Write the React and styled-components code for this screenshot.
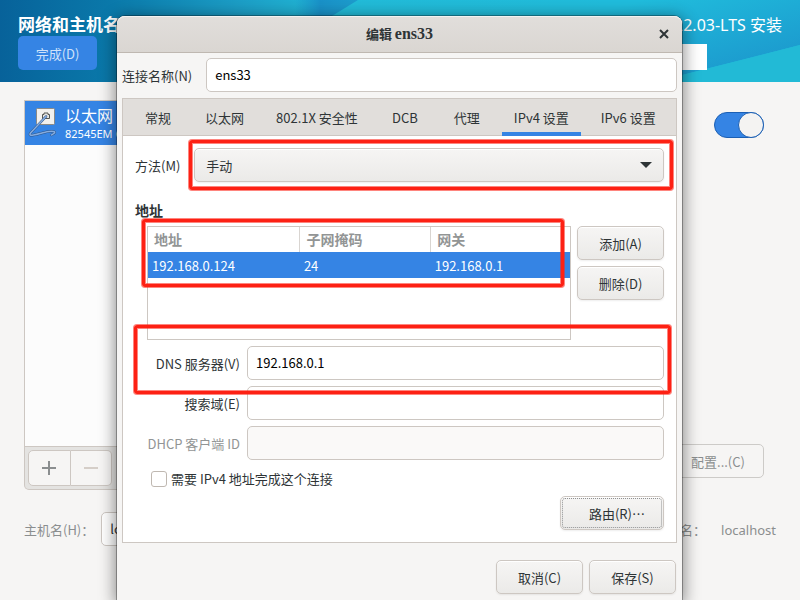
import React, { useState } from 'react';
import styled, { createGlobalStyle } from 'styled-components';

const GlobalStyle = createGlobalStyle`
    *, *::before{
        box-sizing:border-box;
    }
    body{
        margin:0;
        background:#f6f5f4;
        color:#2e3436;
        font-family:"Noto Sans CJK SC", "Noto Sans", sans-serif;
        font-size:13px;
        line-height:20px;
    }
    button, input, select{
        font:inherit;
        color:inherit;
        margin:0;
    }
`

const Page = styled.div`
    position:relative;
    height:100vh;
    min-height:600px;
    display:flex;
    flex-direction:column;
    overflow:hidden;
`

/* ---------- installer screen ---------- */

const Banner = styled.header`
    position:relative;
    height:82px;
    flex:none;
    display:flex;
    justify-content:space-between;
    padding:12px 18px;
    color:white;
    background:#1fb4d5;
`
const BannerArt = styled.svg`
    position:absolute;
    inset:0;
    width:100%;
    height:100%;
`
const BannerSide = styled.div`
    position:relative;
    display:flex;
    flex-direction:column;
    align-items:${props => props.$end ? "flex-end" : "flex-start"};
`
const ScreenTitle = styled.h1`
    margin:0;
    font-size:17px;
    line-height:24px;
    font-weight:700;
    white-space:nowrap;
`
const Product = styled.div`
    font-family:"Noto Sans", "Noto Sans CJK SC", sans-serif;
    font-size:16px;
    line-height:26px;
    white-space:nowrap;
`
const DoneButton = styled.button`
    width:79px;
    height:34px;
    padding:2px 0 0;
    border:none;
    border-radius:5px;
    background:#3584e4;
    color:#cfe2fa;
`
const Layout = styled.button`
    width:70px;
    height:26px;
    margin:6px 75px 0 0;
    border:none;
    background:white;
`
const Main = styled.main`
    flex:1;
    display:flex;
    justify-content:space-between;
    padding:18px 36px 0 24px;
`
const Devices = styled.section`
    width:260px;
    display:flex;
    flex-direction:column;
`
const DeviceList = styled.div`
    height:347px;
    border:1px solid #cdc7c2;
    background:#fcfcfc;
`
const Device = styled.div`
    height:44px;
    display:flex;
    align-items:center;
    gap:7px;
    padding:0 3px;
    background:#3584e4;
    color:white;
    white-space:nowrap;
`
const DeviceName = styled.div`
    padding-top:1px;
    font-size:16px;
    line-height:20px;
`
const DeviceModel = styled.div`
    font-family:"Noto Sans", sans-serif;
    font-size:11px;
    line-height:18px;
`
const ListTools = styled.div`
    height:43px;
    display:flex;
    padding:3px;
    border:1px solid #cdc7c2;
    border-top:none;
    border-radius:0 0 5px 5px;
    background:#e4e3e1;
`
const ToolButton = styled.button`
    width:${props => props.$last ? "41px" : "43px"};
    height:36px;
    display:flex;
    align-items:center;
    justify-content:center;
    padding:0;
    border:1px solid #cdc7c2;
    border-left-width:${props => props.$last ? "0" : "1px"};
    border-radius:${props => props.$last ? "0 5px 5px 0" : "5px 0 0 5px"};
    background:#f6f5f4;
    color:${props => props.disabled ? "#d5cec8" : "#8b8e8f"};
`
const Side = styled.section`
    display:flex;
    flex-direction:column;
    align-items:flex-end;
    justify-content:space-between;
    height:378px;
    padding-top:12px;
`
const Switch = styled.input`
    appearance:none;
    width:50px;
    height:26px;
    display:flex;
    justify-content:flex-end;
    border:1px solid #1b5fb4;
    border-radius:13px;
    background:#3584e4;
    &::before{
        content:"";
        width:26px;
        height:26px;
        margin:-1px;
        border:1px solid #1b5fb4;
        border-radius:50%;
        background:#f4f3f2;
    }
`
const ConfigureButton = styled.button`
    width:92px;
    height:34px;
    padding:2px 0 0;
    border:1px solid #cdcbc8;
    border-radius:5px;
    background:#f6f5f4;
    color:#8b8e8f;
`
const HostRow = styled.footer`
    height:88px;
    display:flex;
    align-items:flex-start;
    justify-content:space-between;
    padding:0 24px;
    color:#8b8e8f;
    line-height:36px;
`
const HostField = styled.div`
    display:flex;
    gap:${props => props.$gap};
`
const HostInput = styled.input`
    width:160px;
    height:34px;
    padding:0 8px;
    border:1px solid #cdc7c2;
    border-radius:5px;
    background:white;
    color:#2e3436;
`
const CurrentHost = styled.span`
    font-family:"Noto Sans", sans-serif;
`

/* ---------- connection editor window ---------- */

const Window = styled.div`
    position:absolute;
    top:16px;
    left:117px;
    right:118px;
    min-height:calc(100% - 16px);
    border-radius:8px 8px 0 0;
    background:#f6f5f4;
    box-shadow:0 0 0 1px rgba(0,0,0,0.3), 0 3px 16px 2px rgba(0,0,0,0.45);
`
const TitleBar = styled.div`
    height:37px;
    display:grid;
    grid-template-columns:36px 1fr 36px;
    align-items:center;
    border-bottom:1px solid #bfb8b1;
    border-radius:8px 8px 0 0;
    background:linear-gradient(#e1dedb, #dad6d2);
    box-shadow:inset 0 1px #f3f2f1;
`
const WindowTitle = styled.h2`
    grid-column:2;
    margin:0;
    text-align:center;
    font-size:13px;
    line-height:20px;
    font-weight:700;
`
const Serif = styled.span`
    font-family:"Liberation Serif", serif;
    font-size:16px;
`
const CloseButton = styled.button`
    height:30px;
    padding:0;
    display:flex;
    align-items:center;
    justify-content:center;
    border:none;
    background:none;
`
const Body = styled.div`
    padding:5px 5px 0;
`
const NameRow = styled.div`
    display:flex;
    align-items:center;
    margin-bottom:6px;
`
const Label = styled.label`
    padding:2px 14px 0 0;
    white-space:nowrap;
`
const Entry = styled.input`
    flex:1;
    min-width:0;
    height:34px;
    padding:0 8px 2px;
    border:1px solid #cdc7c2;
    border-radius:5px;
    background:white;
    color:black;
    &:disabled{
        background:#faf9f8;
    }
`
const Notebook = styled.div`
    border:1px solid #cdc7c2;
    background:white;
`
const Tabs = styled.div`
    height:37px;
    display:flex;
    gap:8px;
    padding:0 8px;
    border-bottom:1px solid #cdc7c2;
    background:#e1dedb;
`
const Tab = styled.button`
    min-width:54px;
    height:37px;
    padding:4px 12px 0;
    border:none;
    border-bottom:4px solid ${props => props.$active ? "#3584e4" : "transparent"};
    background:none;
    white-space:nowrap;
`
const Panel = styled.div`
    padding:12px;
`
const MethodRow = styled.div`
    display:flex;
    align-items:center;
`
const SelectBox = styled.div`
    position:relative;
    flex:1;
    display:grid;
    align-items:center;
`
const Select = styled.select`
    appearance:none;
    grid-area:1 / 1;
    height:34px;
    padding:2px 11px 0;
    border:1px solid #cdc7c2;
    border-radius:5px;
    background:linear-gradient(#f6f5f4, #ebeae8);
    box-shadow:inset 0 1px white, 0 1px 2px rgba(0,0,0,0.07);
`
const Arrow = styled.svg`
    grid-area:1 / 1;
    justify-self:end;
    margin-right:12px;
    pointer-events:none;
`
const SectionTitle = styled.h3`
    margin:18px 0 6px;
    font-size:14px;
    line-height:20px;
    font-weight:700;
`
const AddressRow = styled.div`
    display:flex;
    gap:6px;
    margin-left:12px;
`
const TableFrame = styled.div`
    position:relative;
    flex:1;
    height:114px;
    border:1px solid #cdc7c2;
`
const Table = styled.table`
    width:100%;
    border-collapse:collapse;
    table-layout:fixed;
`
const HeadCell = styled.th`
    width:${props => props.$width || "auto"};
    height:25px;
    padding:0 6px 2px;
    border-right:1px solid #d9d5d1;
    color:#929595;
    font-size:14px;
    line-height:20px;
    font-weight:700;
    text-align:left;
    &:last-child{
        border-right:none;
    }
`
const Cell = styled.td`
    height:26px;
    padding:2px 4px 0;
    background:#3584e4;
    color:white;
`
const ButtonColumn = styled.div`
    width:87px;
    display:flex;
    flex-direction:column;
    gap:6px;
`
const Button = styled.button`
    width:${props => props.$wide ? "104px" : "87px"};
    height:34px;
    padding:${props => props.$wide ? "2px 0 0 10px" : "2px 0 0"};
    border:1px solid #cdc7c2;
    border-radius:5px;
    background:linear-gradient(#f6f5f4, #ebeae8);
    box-shadow:inset 0 1px white, 0 1px 2px rgba(0,0,0,0.07);
    outline:${props => props.$wide ? "1px dotted #8f9192" : "none"};
    outline-offset:-3px;
`
const Fields = styled.div`
    display:flex;
    flex-direction:column;
    gap:6px;
    margin-top:6px;
`
const Field = styled.div`
    position:relative;
    display:flex;
    align-items:center;
    gap:6px;
`
const FieldLabel = styled.label`
    width:106px;
    padding:2px 1px 0 0;
    text-align:right;
    white-space:nowrap;
    color:${props => props.$dim ? "#929595" : "inherit"};
`
const Require = styled.div`
    display:flex;
    align-items:center;
    gap:4px;
    height:26px;
    margin:0 0 4px 16px;
`
const Check = styled.input`
    appearance:none;
    width:16px;
    height:16px;
    border:1px solid #bfb8b1;
    border-radius:3px;
    background:white;
`
const Actions = styled.div`
    display:flex;
    justify-content:flex-end;
    gap:6px;
    padding:${props => props.$footer ? "17px 1px 6px" : "0"};
`
// red frame drawn over the parts the reader has to fill in
const Highlight = styled.div`
    position:absolute;
    inset:${props => props.$inset};
    z-index:1;
    border:3px solid #fd2114;
    border-radius:3px;
    box-shadow:0 0 0 1px rgba(253,33,20,0.55), inset 0 0 0 1px rgba(253,33,20,0.55);
    pointer-events:none;
`

const EthernetIcon = () => (
    <svg width="30" height="36" viewBox="0 0 30 36">
        <rect x="8.5" y="3.5" width="18" height="16" rx="1" fill="#f2f1ee" stroke="#8b8a86" />
        <path d="M14.5 13.5v-4h1.5v-1.500h4v1.500h1.500v4z" fill="#e4e4e1" stroke="#555753" />
        <path d="M18 11.500L2.500 28c-1.500 2.500 0 2.500 3 2 8-1.500 14-4.500 20-3.500 2.500.5 1 2-2 3.500" fill="none" stroke="#2c5384" strokeWidth="2.500" strokeLinecap="round" />
        <path d="M18 11.500L2.500 28c-1.500 2.500 0 2.500 3 2 8-1.500 14-4.500 20-3.500 2.500.5 1 2-2 3.500" fill="none" stroke="#85ace0" strokeWidth="1.500" strokeLinecap="round" />
    </svg>
)

const tabs = ["常规", "以太网", "802.1X 安全性", "DCB", "代理", "IPv4 设置", "IPv6 设置"];
const addresses = [
    { address: "192.168.0.124", mask: "24", gateway: "192.168.0.1" },
];

const Installer = () => (
    <>
        <Banner>
            <BannerArt viewBox="0 0 800 82" preserveAspectRatio="none">
                <defs>
                    <linearGradient id="sea" x1="0" x2="1" y1="0" y2="0">
                        <stop offset="0" stopColor="#07629a" />
                        <stop offset="0.14" stopColor="#0a79aa" />
                        <stop offset="0.3" stopColor="#1c9ec6" />
                        <stop offset="0.42" stopColor="#22bbd8" />
                        <stop offset="1" stopColor="#20bcdc" />
                    </linearGradient>
                    <linearGradient id="wave" gradientUnits="userSpaceOnUse" x1="715" x2="740" y1="-20" y2="70">
                        <stop offset="0" stopColor="#20bcdc" />
                        <stop offset="1" stopColor="#1c9ace" />
                    </linearGradient>
                    <linearGradient id="fold" x1="0" x2="1" y1="0" y2="0">
                        <stop offset="0" stopColor="#1991c8" stopOpacity="0" />
                        <stop offset="0.4" stopColor="#1991c8" />
                        <stop offset="1" stopColor="#1d9dcd" />
                    </linearGradient>
                </defs>
                <rect width="800" height="82" fill="url(#sea)" />
                <path d="M295 0h63l-26 16h-37z" fill="url(#fold)" />
                <path d="M600 0H800V45L682 75 600 82z" fill="url(#wave)" />
                <path d="M800 45L682 75l-22 7H800z" fill="#22bad6" />
            </BannerArt>
            <BannerSide>
                <ScreenTitle>网络和主机名</ScreenTitle>
                <DoneButton>完成(D)</DoneButton>
            </BannerSide>
            <BannerSide $end>
                <Product>22.03-LTS 安装</Product>
                <Layout aria-label="keyboard layout" />
            </BannerSide>
        </Banner>
        <Main>
            <Devices>
                <DeviceList>
                    <Device>
                        <EthernetIcon />
                        <div>
                            <DeviceName>以太网</DeviceName>
                            <DeviceModel>82545EM G</DeviceModel>
                        </div>
                    </Device>
                </DeviceList>
                <ListTools>
                    <ToolButton aria-label="add">
                        <svg width="15" height="14"><path d="M7 0v14M0 7h14" stroke="currentColor" strokeWidth="2" /></svg>
                    </ToolButton>
                    <ToolButton aria-label="remove" $last disabled>
                        <svg width="14" height="14"><path d="M0 7h14" stroke="currentColor" strokeWidth="2" /></svg>
                    </ToolButton>
                </ListTools>
            </Devices>
            <Side>
                <Switch type="checkbox" role="switch" aria-label="ens33" defaultChecked />
                <ConfigureButton disabled>配置...(C)</ConfigureButton>
            </Side>
        </Main>
        <HostRow>
            <HostField $gap="7px">
                <label htmlFor="host">主机名(H)：</label>
                <HostInput id="host" defaultValue="localhost" />
            </HostField>
            <HostField $gap="15px">
                <span>当前主机名：</span>
                <CurrentHost>localhost</CurrentHost>
            </HostField>
        </HostRow>
    </>
)

const App = () => {
    const [tab, setTab] = useState("IPv4 设置");
    const [name, setName] = useState("ens33");
    const [dns, setDns] = useState("192.168.0.1");
    const [search, setSearch] = useState("");

    return (
        <Page>
            <GlobalStyle />
            <Installer />
            <Window role="dialog" aria-labelledby="title">
                <TitleBar>
                    <WindowTitle id="title">编辑 <Serif>ens33</Serif></WindowTitle>
                    <CloseButton aria-label="close">
                        <svg width="10" height="10"><path d="M1 1l8 8M9 1L1 9" stroke="#2e3436" strokeWidth="2" /></svg>
                    </CloseButton>
                </TitleBar>
                <Body>
                    <NameRow>
                        <Label htmlFor="name">连接名称(N)</Label>
                        <Entry id="name" value={name} onChange={(e) => setName(e.target.value)} />
                    </NameRow>
                    <Notebook>
                        <Tabs role="tablist">
                            {tabs.map((item) => (
                                <Tab key={item} role="tab" aria-selected={item === tab} $active={item === tab} onClick={() => setTab(item)}>
                                    {item}
                                </Tab>
                            ))}
                        </Tabs>
                        <Panel role="tabpanel">
                            <MethodRow>
                                <Label htmlFor="method">方法(M)</Label>
                                <SelectBox>
                                    <Select id="method" defaultValue="手动">
                                        <option>手动</option>
                                    </Select>
                                    <Arrow width="12" height="6"><path d="M0 0h12L6 6z" fill="#2e3436" /></Arrow>
                                    <Highlight $inset="-8px -9px -8px -5px" />
                                </SelectBox>
                            </MethodRow>
                            <SectionTitle>地址</SectionTitle>
                            <AddressRow>
                                <TableFrame>
                                    <Table>
                                        <thead>
                                            <tr>
                                                <HeadCell $width="36%">地址</HeadCell>
                                                <HeadCell $width="31%">子网掩码</HeadCell>
                                                <HeadCell>网关</HeadCell>
                                            </tr>
                                        </thead>
                                        <tbody>
                                            {addresses.map((row) => (
                                                <tr key={row.address}>
                                                    <Cell>{row.address}</Cell>
                                                    <Cell>{row.mask}</Cell>
                                                    <Cell>{row.gateway}</Cell>
                                                </tr>
                                            ))}
                                        </tbody>
                                    </Table>
                                    <Highlight $inset="-8px 6px 52px -6px" />
                                </TableFrame>
                                <ButtonColumn>
                                    <Button>添加(A)</Button>
                                    <Button>删除(D)</Button>
                                </ButtonColumn>
                            </AddressRow>
                            <Fields>
                                <Field>
                                    <FieldLabel htmlFor="dns">DNS 服务器(V)</FieldLabel>
                                    <Entry id="dns" value={dns} onChange={(e) => setDns(e.target.value)} />
                                    <Highlight $inset="-21px -7px -14px -1px" />
                                </Field>
                                <Field>
                                    <FieldLabel htmlFor="search">搜索域(E)</FieldLabel>
                                    <Entry id="search" value={search} onChange={(e) => setSearch(e.target.value)} />
                                </Field>
                                <Field>
                                    <FieldLabel htmlFor="dhcp" $dim>DHCP 客户端 ID</FieldLabel>
                                    <Entry id="dhcp" disabled />
                                </Field>
                                <Require>
                                    <Check type="checkbox" id="require" />
                                    <label htmlFor="require">需要 IPv4 地址完成这个连接</label>
                                </Require>
                            </Fields>
                            <Actions>
                                <Button $wide>路由(R)⋯</Button>
                            </Actions>
                        </Panel>
                    </Notebook>
                    <Actions $footer>
                        <Button>取消(C)</Button>
                        <Button>保存(S)</Button>
                    </Actions>
                </Body>
            </Window>
        </Page>
    );
};

export default App;
